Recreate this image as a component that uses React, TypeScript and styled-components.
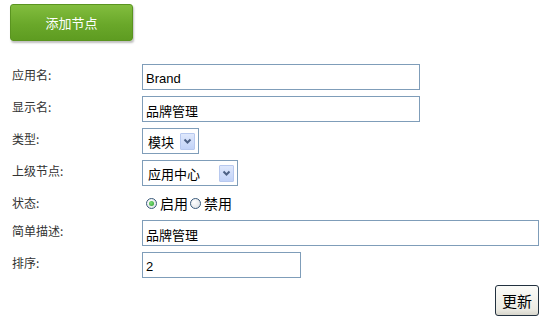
import React from "react";
import styled, { createGlobalStyle } from "styled-components";

const Global = createGlobalStyle`
  html, body { margin: 0; padding: 0; background: #fff; }
  body { font-family: "Liberation Sans", "Noto Sans CJK SC", sans-serif; }
`;

const Page = styled.div`
  width: 551px;
  height: 318px;
  box-sizing: border-box;
  padding: 4px 12px 0 10px;
  display: flex;
  flex-direction: column;
`;

const AddButton = styled.button`
  width: 123px;
  height: 37px;
  border: 1px solid #5a9420;
  border-radius: 3px;
  background: linear-gradient(#82bd3e, #6aa82a 55%, #5e9c21);
  box-shadow: 1px 2px 2px rgba(0, 0, 0, 0.25);
  color: #fff;
  font-family: "Noto Sans CJK SC", sans-serif;
  font-size: 13px;
  padding: 0;
  cursor: pointer;
`;

const Form = styled.div`
  margin-top: 23px;
  display: grid;
  grid-template-columns: 132px 1fr;
  row-gap: 6px;
`;

const Label = styled.div`
  padding-left: 2px;
  padding-top: 3px;
  font-family: "Noto Sans CJK SC", sans-serif;
  font-size: 12px;
  line-height: 16px;
  color: #333;
`;

const Field = styled.div`
  display: flex;
  align-items: center;
  min-height: 22px;
`;

const TextInput = styled.input<{ $w: number }>`
  width: ${(p) => p.$w}px;
  height: 26px;
  box-sizing: border-box;
  border: 1px solid #7f9db9;
  padding: 2px 3px 0;
  font-family: "Liberation Sans", "Noto Sans CJK SC", sans-serif;
  font-size: 13px;
  color: #000;
  outline: none;
`;

const SelectBox = styled.div<{ $w: number }>`
  width: ${(p) => p.$w}px;
  height: 26px;
  box-sizing: border-box;
  border: 1px solid #7f9db9;
  display: flex;
  align-items: center;
  justify-content: space-between;
  padding: 0 3px 0 5px;
  font-family: "Noto Sans CJK SC", sans-serif;
  font-size: 13px;
  color: #000;
`;

const Arrow = styled.span`
  width: 15px;
  height: 17px;
  box-sizing: border-box;
  border: 1px solid #b8c9ef;
  border-radius: 1px;
  background: linear-gradient(#dfe8fc, #c2d3f8);
  display: flex;
  align-items: center;
  justify-content: center;
`;

const RadioGroup = styled.div`
  display: flex;
  align-items: center;
  height: 22px;
  margin-left: 4px;
  font-family: "Noto Sans CJK SC", sans-serif;
  font-size: 14px;
  color: #000;
`;

const RadioItem = styled.label`
  display: flex;
  align-items: center;
  gap: 3px;
  margin-right: 2px;
`;

const RadioCircle = styled.span<{ $on?: boolean }>`
  width: 11px;
  height: 11px;
  box-sizing: border-box;
  border-radius: 50%;
  border: 1px solid #3a5a7a;
  background: radial-gradient(circle at 35% 35%, #ffffff, #d8dde2);
  display: flex;
  align-items: center;
  justify-content: center;
  &::after {
    content: "";
    display: ${(p) => (p.$on ? "block" : "none")};
    width: 5px;
    height: 5px;
    border-radius: 50%;
    background: radial-gradient(circle at 40% 40%, #7ee07a, #2a9a2a);
  }
`;

const Footer = styled.div`
  display: flex;
  justify-content: flex-end;
  margin-top: 7px;
`;

const UpdateButton = styled.button`
  width: 44px;
  height: 31px;
  box-sizing: border-box;
  border: 1px solid #22313f;
  border-radius: 3px;
  background: linear-gradient(#fbfbf8, #ecebe4 80%, #d8d6cc);
  font-family: "Noto Sans CJK SC", sans-serif;
  font-size: 15px;
  color: #000;
  padding: 0;
`;

const Chevron = () => (
  <svg width="9" height="7" viewBox="0 0 9 7">
    <path d="M1.5 1.5 L4.5 4.5 L7.5 1.5" fill="none" stroke="#4d6185" strokeWidth="2" />
  </svg>
);

export default function App() {
  return (
    <>
      <Global />
      <Page>
        <div>
          <AddButton>添加节点</AddButton>
        </div>
        <Form>
          <Label>应用名:</Label>
          <Field>
            <TextInput $w={278} defaultValue="Brand" />
          </Field>
          <Label>显示名:</Label>
          <Field>
            <TextInput $w={278} defaultValue="品牌管理" />
          </Field>
          <Label>类型:</Label>
          <Field>
            <SelectBox $w={57}>
              <span>模块</span>
              <Arrow>
                <Chevron />
              </Arrow>
            </SelectBox>
          </Field>
          <Label>上级节点:</Label>
          <Field>
            <SelectBox $w={96}>
              <span>应用中心</span>
              <Arrow>
                <Chevron />
              </Arrow>
            </SelectBox>
          </Field>
          <Label>状态:</Label>
          <Field>
            <RadioGroup>
              <RadioItem>
                <RadioCircle $on />
                启用
              </RadioItem>
              <RadioItem>
                <RadioCircle />
                禁用
              </RadioItem>
            </RadioGroup>
          </Field>
          <Label>简单描述:</Label>
          <Field>
            <TextInput $w={397} defaultValue="品牌管理" />
          </Field>
          <Label>排序:</Label>
          <Field>
            <TextInput $w={159} defaultValue="2" />
          </Field>
        </Form>
        <Footer>
          <UpdateButton>更新</UpdateButton>
        </Footer>
      </Page>
    </>
  );
}
